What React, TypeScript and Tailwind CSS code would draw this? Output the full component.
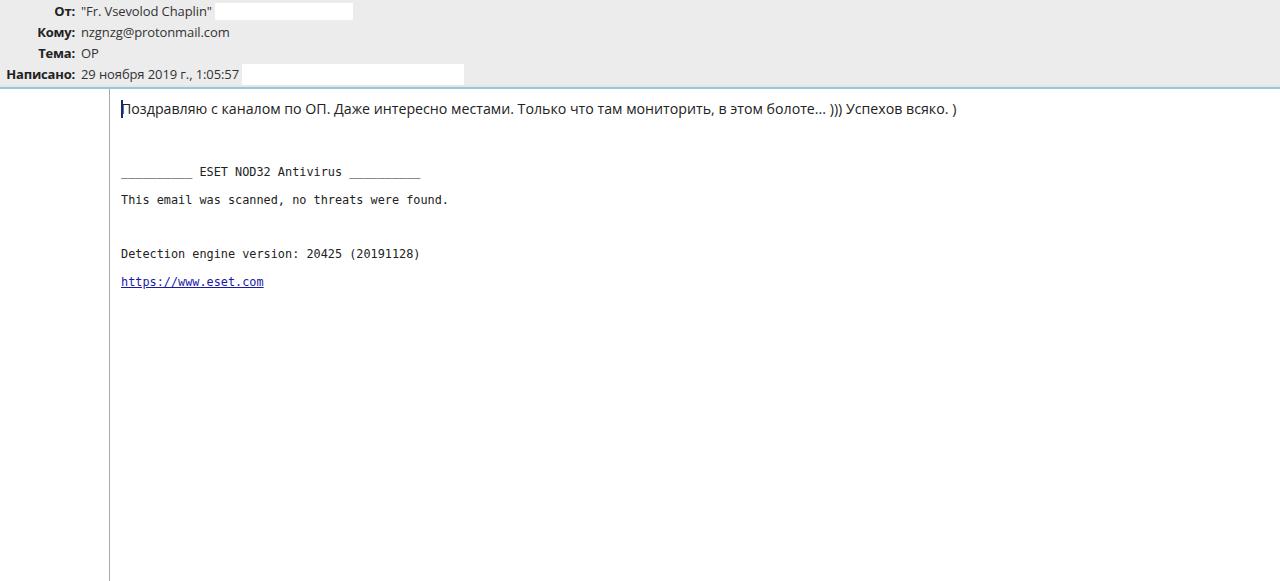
const headerRows = [
  { label: "От:", value: "\"Fr. Vsevolod Chaplin\"", blank: "w-[138px] h-[17px]" },
  { label: "Кому:", value: "nzgnzg@protonmail.com" },
  { label: "Тема:", value: "OP" },
  { label: "Написано:", value: "29 ноября 2019 г., 1:05:57", blank: "w-[222px] h-[21px]" },
];

const MailHeader = () => {
  return (
    <div className="bg-[#ececec] pt-[1px] h-[85px] font-['Open_Sans',sans-serif] text-[13px] text-[#333]">
      {headerRows.map((row) => (
        <div key={row.label} className="flex items-center h-[21px]">
          <div className="w-[75px] text-right font-bold text-[#222] tracking-[-0.2px]">{row.label}</div>
          <div className="pl-[6px] flex items-center tracking-[-0.1px]">
            <span>{row.value}</span>
            {row.blank && <span className={`ml-[3px] bg-white ${row.blank}`}></span>}
          </div>
        </div>
      ))}
    </div>
  );
};

export default function App() {
  return (
    <div className="w-[1280px] h-[581px] bg-white flex flex-col overflow-hidden">
      <MailHeader />
      <div className="h-[2px] bg-[#dde9f1]"></div>
      <div className="h-[2px] bg-[#9cc6d6]"></div>
      <div className="flex flex-1">
        <div className="w-[110px] border-r border-[#a8a8a8]"></div>
        <div className="pl-[11px] pt-[10px]">
          <p className="relative font-['Open_Sans',sans-serif] text-[14.2px] text-[#222] leading-[20px]">
            <span className="absolute left-0 top-[1px] w-[2px] h-[18px] bg-[#1c2a6a]"></span>
            Поздравляю с каналом по ОП. Даже интересно местами. Только что там мониторить, в этом болоте... ))) Успехов всяко. )
          </p>
          <div className="mt-[46px] font-['DejaVu_Sans_Mono',monospace] text-[11.85px] leading-[14px] text-[#222]">
            <p>__________ ESET NOD32 Antivirus __________</p>
            <p className="mt-[14px]">This email was scanned, no threats were found.</p>
            <p className="mt-[40px]">Detection engine version: 20425 (20191128)</p>
            <p className="mt-[14px]">
              <a href="#" className="text-[#1a1aa6] underline">https://www.eset.com</a>
            </p>
          </div>
        </div>
      </div>
    </div>
  );
}
